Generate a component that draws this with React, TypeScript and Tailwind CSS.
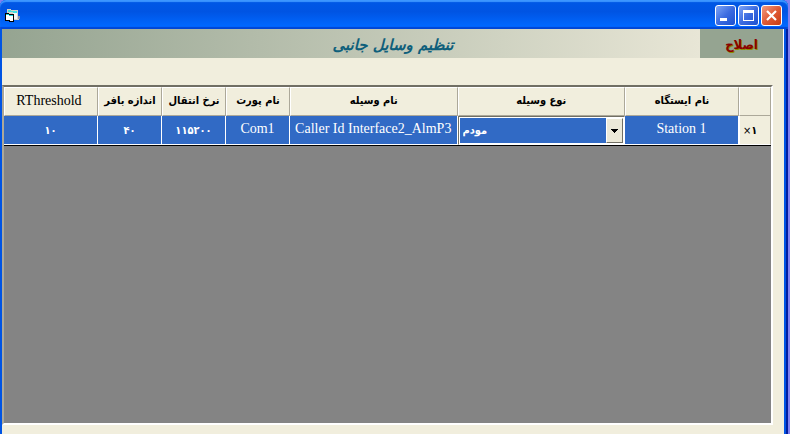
import type { ReactNode } from 'react';

const latin = "font-['Liberation_Serif','DejaVu_Sans',serif] text-[14px]";
const persian = "font-['DejaVu_Sans_Condensed','DejaVu_Sans',sans-serif] text-[11px] font-bold";

const columns = [
  { title: 'RThreshold', value: '۱۰', width: 'w-[94px]', latinTitle: true },
  { title: 'اندازه بافر', value: '۴۰', width: 'w-[64px]' },
  { title: 'نرخ انتقال', value: '۱۱۵۲۰۰', width: 'w-[64px]' },
  { title: 'نام پورت', value: 'Com1', width: 'w-[64px]', latinValue: true },
  { title: 'نام وسیله', value: 'Caller Id Interface2_AlmP3', width: '', latinValue: true },
  { title: 'نوع وسیله', value: 'مودم', width: '', combo: true },
  { title: 'نام ایستگاه', value: 'Station 1', width: 'w-[114px]', latinValue: true },
];

function CaptionButton({ label, close, children }: { label: string; close?: boolean; children: ReactNode }) {
  return (
    <button
      type="button"
      aria-label={label}
      className={`size-[21px] rounded-[3px] border border-white ${
        close
          ? 'bg-linear-to-br from-[#f09a80] via-[#e05a35] to-[#c83c10]'
          : 'bg-linear-to-br from-[#7fa4f5] via-[#3c6be0] to-[#1c50d0]'
      }`}
    >
      <svg viewBox="0 0 19 19" className="size-[19px]" shapeRendering="crispEdges" fill="none" stroke="white">
        {children}
      </svg>
    </button>
  );
}

function TitleBar() {
  return (
    <header className="flex h-[29px] items-center justify-between rounded-t-md bg-linear-to-b from-[#0058e6] from-0% via-[#0054e3] via-40% to-[#0068ff] to-90% pt-[2px] pr-[6px] pl-[5px] shadow-[inset_0_2px_1px_#3c96ff,inset_0_-2px_1px_#0046d5]">
      <svg viewBox="0 0 16 14" className="h-[14px] w-[16px]" shapeRendering="crispEdges" aria-hidden="true">
        <path d="M2 0h4v1h7v7h1v3H8V5H2z" fill="#d4d0c8" />
        <path d="M3 1h3v1h6v2H8V3H3z" fill="#40e0e0" />
        <path d="M8 4h4v6H8z" fill="#f4f4f4" />
        <path d="M13 7h2v3h-2z" fill="#8b91a8" />
        <path d="M0 4h4v1h5v8H4v-1H0z" fill="#000" />
        <path d="M1 6h3v1h4v5H5v-1H1z" fill="#fff" />
        <path d="M1 5h3v1h4v1H4V6H1z" fill="#18d8dc" />
      </svg>
      <div className="flex gap-[2px]">
        <CaptionButton label="Minimize">
          <path d="M4 13.500h7" strokeWidth="3" />
        </CaptionButton>
        <CaptionButton label="Maximize">
          <path d="M4 5.500h11" strokeWidth="3" />
          <path d="M4.500 6v8.500h10V6" />
        </CaptionButton>
        <CaptionButton label="Close" close>
          <path d="M5 5l9 9M14 5l-9 9" strokeWidth="2.200" shapeRendering="auto" />
        </CaptionButton>
      </div>
    </header>
  );
}

function DeviceTypeCombo() {
  return (
    <div className="flex h-[29px] border border-t-[#716f64] border-r-white border-b-white border-l-[#716f64] bg-white p-px">
      <select
        aria-label="نوع وسیله"
        defaultValue="مودم"
        className={`min-w-0 flex-1 appearance-none bg-[#316ac5] pt-[2px] pl-[3px] text-left text-white outline-none ${persian}`}
      >
        <option>مودم</option>
      </select>
      <span className="flex w-[17px] items-center justify-center border border-t-white border-r-[#716f64] border-b-[#716f64] border-l-white bg-[#ece9d8]">
        <svg viewBox="0 0 7 4" className="h-[4px] w-[7px]" shapeRendering="crispEdges" aria-hidden="true">
          <path d="M0 0h7v1H6v1H5v1H4v1H3V3H2V2H1V1H0z" />
        </svg>
      </span>
    </div>
  );
}

function DeviceTable() {
  return (
    <table className="w-full table-fixed border-separate border-spacing-0 border-b border-black">
      <thead>
        <tr className="h-[29px]">
          {columns.map((c) => (
            <th
              key={c.title}
              scope="col"
              className={`overflow-hidden border-t border-r border-b border-l border-t-white border-r-[#aca899] border-b-[#aca899] border-l-white bg-[#f1eedd] p-0 text-center whitespace-nowrap ${c.width} ${
                c.latinTitle ? `${latin} pr-[4px] pb-[3px] font-normal` : persian
              }`}
            >
              {c.title}
            </th>
          ))}
          <td className="w-[32px] border border-t-white border-r-[#aca899] border-b-[#aca899] border-l-white bg-[#f1eedd] p-0" />
        </tr>
      </thead>
      <tbody>
        <tr className="h-[29px]">
          {columns.map((c) =>
            c.combo ? (
              <td key={c.title} className="p-0">
                <DeviceTypeCombo />
              </td>
            ) : (
              <td
                key={c.title}
                className={`border-r border-b border-white bg-[#316ac5] p-0 text-center whitespace-nowrap text-white ${
                  c.latinValue ? `${latin} pb-[3px]` : `${persian} pt-[2px]`
                }`}
              >
                {c.value}
              </td>
            ),
          )}
          <th
            scope="row"
            dir="ltr"
            className={`border-r border-b border-l border-r-[#aca899] border-b-white border-l-white bg-[#f1eedd] p-0 pt-[2px] pl-[3px] text-left ${persian}`}
          >
            <bdi className="font-normal">×</bdi>
            <bdi>۱</bdi>
          </th>
        </tr>
      </tbody>
    </table>
  );
}

export default function App() {
  return (
    <div className="flex min-h-screen flex-col bg-[#8080f0] pr-[2px]">
      <div className="flex flex-1 flex-col rounded-t-md bg-linear-to-l from-[#001ea0] from-[2px] to-[#0054e3] to-[2px]">
        <TitleBar />
        <main className="mr-[4px] ml-[2px] flex flex-1 flex-col bg-[#f1eedd]">
          <div className="flex h-[29px] border-r border-white">
            <h1 className="flex flex-1 items-center justify-center bg-linear-to-r from-[#95a491] to-[#e8e6d6] pt-[3px] pl-[84px] font-['DejaVu_Sans',sans-serif] text-[15px] font-bold text-[#0f5f7b] italic">
              تنظیم وسایل جانبی
            </h1>
            <button
              type="button"
              className="w-[83px] bg-[#95a491] pt-[3px] font-['DejaVu_Sans_Condensed','DejaVu_Sans',sans-serif] text-[13px] font-bold text-[#8b0000] [text-shadow:1px_1px_#8b8b00]"
            >
              اصلاح
            </button>
          </div>
          <section className="mt-[27px] mr-[11px] mb-[9px] flex-1 border-2 border-t-[#716f64] border-r-white border-b-white border-l-[#aca899] bg-[#848484]">
            <DeviceTable />
          </section>
        </main>
      </div>
    </div>
  );
}
